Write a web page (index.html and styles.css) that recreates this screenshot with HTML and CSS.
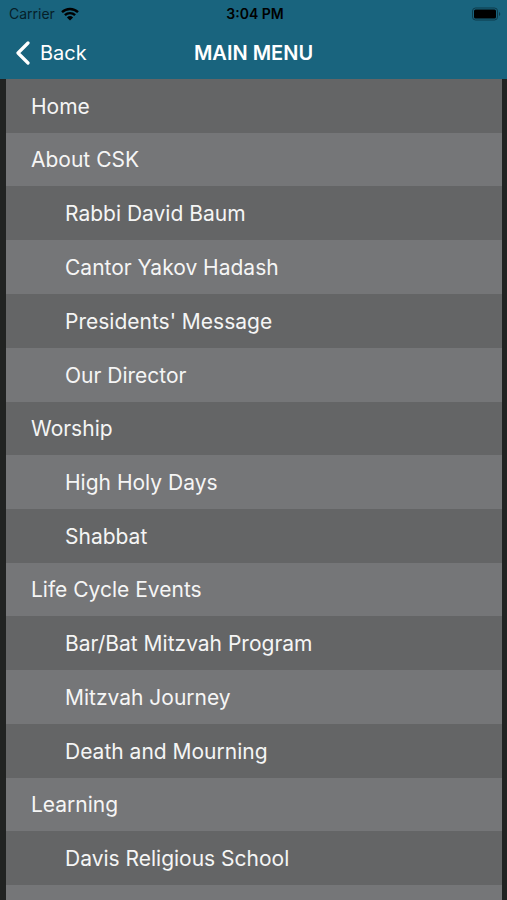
FILE: index.html
```html
<!DOCTYPE html>
<html lang="en">
<head>
  <meta charset="UTF-8">
  <meta name="viewport" content="width=device-width, initial-scale=1.0">
  <title>Main Menu</title>
  <link rel="stylesheet" href="styles.css">
</head>
<body>
  <header class="header">
    <div class="status-bar">
      <div class="carrier">
        <span>Carrier</span>
        <svg class="wifi" viewBox="0 0 18 14" aria-hidden="true">
          <path d="M1 5.2a11.5 11.5 0 0 1 16 0M3.9 8.2a7.3 7.3 0 0 1 10.2 0" fill="none" stroke="#000" stroke-width="2.4"/>
          <path d="M9 13.6L5.9 10.4a4.5 4.5 0 0 1 6.2 0z"/>
        </svg>
      </div>
      <time class="time">3:04 PM</time>
      <svg class="battery" viewBox="0 0 30 14" aria-hidden="true">
        <rect x="1.5" y="1" width="25" height="12" rx="3" fill="none" stroke="#0d3b4b"/>
        <rect x="3" y="2.5" width="22" height="9" rx="1.5"/>
        <path d="M28 5v4a2.2 2.2 0 0 0 0-4z" fill="#0d3b4b"/>
      </svg>
    </div>
    <nav class="nav-bar">
      <button class="back-button" type="button">
        <svg class="chevron" viewBox="0 0 16 24" aria-hidden="true">
          <path d="M13 2L3 12l10 10" fill="none" stroke="#fff" stroke-width="3.2" stroke-linecap="round" stroke-linejoin="round"/>
        </svg>
        <span>Back</span>
      </button>
      <h1 class="title">MAIN MENU</h1>
    </nav>
  </header>

  <main class="content">
    <ul class="menu">
      <li><a class="item" href="#">Home</a></li>
      <li><a class="item" href="#">About CSK</a></li>
      <li><a class="item sub-item" href="#">Rabbi David Baum</a></li>
      <li><a class="item sub-item" href="#">Cantor Yakov Hadash</a></li>
      <li><a class="item sub-item" href="#">Presidents' Message</a></li>
      <li><a class="item sub-item" href="#">Our Director</a></li>
      <li><a class="item" href="#">Worship</a></li>
      <li><a class="item sub-item" href="#">High Holy Days</a></li>
      <li><a class="item sub-item" href="#">Shabbat</a></li>
      <li><a class="item" href="#">Life Cycle Events</a></li>
      <li><a class="item sub-item" href="#">Bar/Bat Mitzvah Program</a></li>
      <li><a class="item sub-item" href="#">Mitzvah Journey</a></li>
      <li><a class="item sub-item" href="#">Death and Mourning</a></li>
      <li><a class="item" href="#">Learning</a></li>
      <li><a class="item sub-item" href="#">Davis Religious School</a></li>
    </ul>
  </main>
</body>
</html>
```

FILE: styles.css
```css
* {
  box-sizing: border-box;
}
body {
  display: flex;
  flex-direction: column;
  height: 100vh;
  margin: 0;
  font-family: Inter, "Liberation Sans", sans-serif;
  background-color: #212322;
}
.header {
  background-color: #19647e;
}
.status-bar {
  display: grid;
  grid-template-columns: 1fr auto 1fr;
  align-items: center;
  height: 27px;
  padding: 0 6px 0 9px;
  font-size: 14px;
  color: #062029;
}
.carrier {
  display: flex;
  align-items: center;
  gap: 6px;
}
.wifi {
  width: 18px;
  height: 14px;
}
.time {
  font-weight: 600;
  color: #000;
}
.battery {
  justify-self: end;
  width: 30px;
  height: 14px;
}
.nav-bar {
  display: grid;
  grid-template-columns: 1fr auto 1fr;
  align-items: center;
  height: 52px;
  padding: 0 15px;
  color: #fff;
}
.back-button {
  display: flex;
  align-items: center;
  gap: 9px;
  justify-self: start;
  padding: 0;
  border: none;
  background: none;
  font-family: inherit;
  font-size: 20px;
  color: #fff;
  cursor: pointer;
}
.chevron {
  width: 16px;
  height: 24px;
}
.title {
  margin: 0;
  font-size: 20px;
  font-weight: 600;
}
.content {
  flex: 1;
  min-height: 0;
  padding: 0 5px 0 6px;
}
.menu {
  height: 100%;
  margin: 0;
  padding: 1px 0 0;
  overflow-y: auto;
  scrollbar-width: none;
  list-style: none;
  background: linear-gradient(#646566 50%, #757678 50%);
}
.item {
  display: flex;
  align-items: center;
  height: 53px;
  padding-left: 25px;
  font-size: 21px;
  color: #f5f5f5;
  text-decoration: none;
  background-color: #757678;
}
.sub-item {
  height: 54px;
  padding-left: 59px;
}
li:nth-child(odd) .item {
  background-color: #646566;
}
```
